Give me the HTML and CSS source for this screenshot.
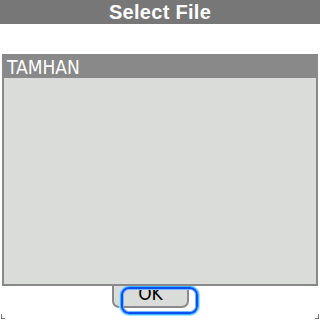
FILE: index.html
```html
<!DOCTYPE html>
<html lang="en">
<head>
    <meta charset="UTF-8">
    <meta name="viewport" content="width=device-width, initial-scale=1.0">
    <title>Select File</title>
    <link rel="stylesheet" href="styles.css">
</head>
<body>
    <div class="dialog">
        <header class="title-bar">Select File</header>

        <div class="file-list">
            <div class="list-header">TAMHAN</div>
            <div class="list-body"></div>
        </div>

        <div class="footer">
            <button class="ok-button">OK<span class="focus-ring"></span></button>
        </div>

        <span class="corner corner-left"></span>
        <span class="corner corner-right"></span>
    </div>
</body>
</html>
```

FILE: styles.css
```css
body {
    margin: 0;
    padding: 0;
    background-color: #fff;
    font-family: 'DejaVu Sans', 'Liberation Sans', sans-serif;
}

.dialog {
    position: relative;
    width: 320px;
    height: 320px;
    overflow: hidden;
    display: flex;
    flex-direction: column;
}

.title-bar {
    height: 24px;
    line-height: 24px;
    background-color: #777777;
    color: #fff;
    text-align: center;
    font-family: 'Liberation Sans', Arial, sans-serif;
    font-weight: bold;
    font-size: 20px;
    letter-spacing: 0.3px;
}

.file-list {
    position: relative;
    z-index: 1;
    margin: 30px 2px 0 2px;
    height: 232px;
    box-sizing: border-box;
    border: 2px solid #898989;
    display: flex;
    flex-direction: column;
}

.list-header {
    height: 22px;
    line-height: 22px;
    padding-left: 3px;
    background-color: #898989;
    color: #fff;
    font-size: 19px;
    font-stretch: condensed;
}

.list-body {
    flex: 1;
    background-color: #d9dcd8;
}

.footer {
    display: flex;
    padding-left: 112px;
}

.ok-button {
    position: relative;
    margin-top: -7px;
    width: 77px;
    height: 29px;
    box-sizing: border-box;
    padding: 0;
    border: 2px solid #8a8a8a;
    border-radius: 7px;
    background-color: #d9dcd8;
    color: #000;
    font-family: 'DejaVu Sans', 'Liberation Sans', sans-serif;
    font-size: 19px;
    font-stretch: condensed;
    line-height: 25px;
    text-align: center;
}

.focus-ring {
    position: absolute;
    left: 7px;
    top: 6px;
    width: 77px;
    height: 27px;
    box-sizing: border-box;
    border: 2px solid #0a4ff5;
    border-radius: 8px;
    box-shadow: 0 0 0 1px #3fb6ff, 0 0 0 2px #a6e6ff, inset 0 0 0 1px #7ab6ff;
}

.corner {
    position: absolute;
    bottom: 1px;
    width: 3px;
    height: 4px;
    border-bottom: 1px solid #777;
}

.corner-left {
    left: 1px;
    border-left: 1px solid #777;
}

.corner-right {
    right: 1px;
    border-right: 1px solid #777;
}
```
